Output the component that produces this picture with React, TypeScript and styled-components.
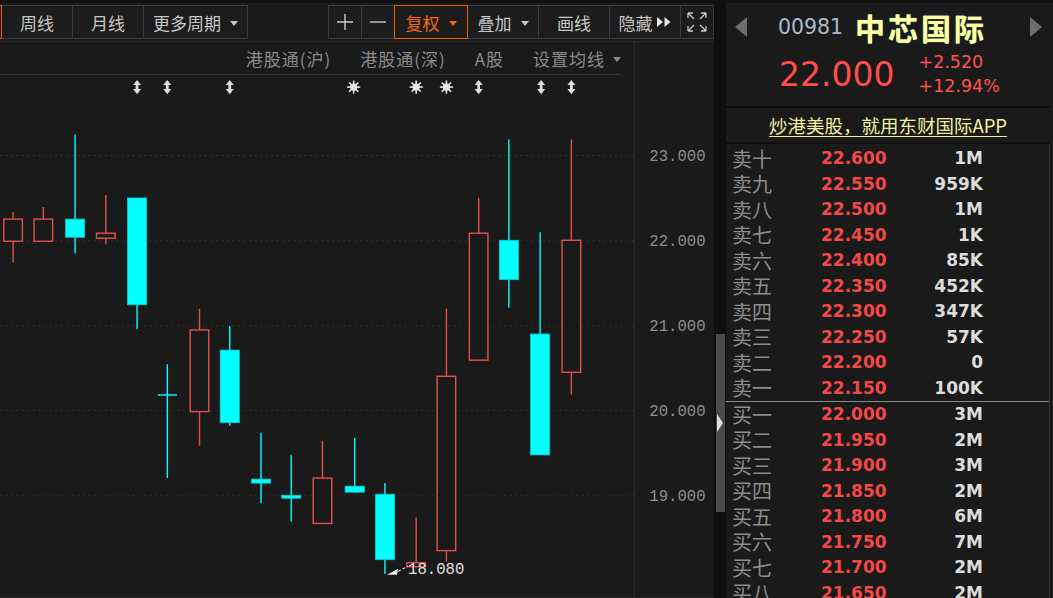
import React from "react";
import styled, { createGlobalStyle } from "styled-components";

const GlobalStyle = createGlobalStyle`
  html, body {
    margin: 0;
    padding: 0;
    background: #101010;
  }
  body {
    font-family: "Noto Sans CJK SC", "DejaVu Sans", sans-serif;
    overflow: hidden;
  }
`;

const RED = "#e4504e";
const CYAN = "#00ffff";

const Page = styled.div`
  display: flex;
  width: 1053px;
  height: 598px;
  padding-top: 3px;
  box-sizing: border-box;
  background: #101010;
`;

const LeftPane = styled.div`
  width: 714px;
  display: flex;
  flex-direction: column;
  background: #1a1a1a;
`;

const Toolbar = styled.div`
  height: 39px;
  flex-shrink: 0;
  box-sizing: border-box;
  display: flex;
  justify-content: space-between;
  align-items: flex-start;
  padding-top: 2px;
  border-bottom: 1px solid #2b2b2b;
  overflow: hidden;
`;

const ToolGroup = styled.div`
  display: flex;
`;

const ToolButton = styled.div<{ $w: number; $active?: boolean; $ml?: number }>`
  position: relative;
  flex-shrink: 0;
  width: ${(p) => p.$w}px;
  height: 34px;
  box-sizing: border-box;
  margin-left: ${(p) => (p.$ml !== undefined ? p.$ml : -1)}px;
  border: 1px solid ${(p) => (p.$active ? "#e8620c" : "#3c3c3c")};
  z-index: ${(p) => (p.$active ? 1 : 0)};
  background: #1c1c1c;
  color: ${(p) => (p.$active ? "#f26a12" : "#c6c6c6")};
  font-size: 17px;
  display: flex;
  align-items: center;
  justify-content: center;
  gap: 9px;
  white-space: nowrap;
`;

const Caret = styled.span`
  width: 0;
  height: 0;
  border-left: 4px solid transparent;
  border-right: 4px solid transparent;
  border-top: 5px solid currentColor;
  margin-top: 2px;
`;

const HideLabel = styled.span`
  display: flex;
  align-items: center;
  gap: 3px;
`;

const Body = styled.div`
  flex: 1;
  display: flex;
  min-height: 0;
`;

const PlotColumn = styled.div`
  width: 635px;
  box-sizing: border-box;
  border-right: 1px solid #2a2a2a;
  display: flex;
  flex-direction: column;
`;

const LabelBar = styled.div`
  height: 33px;
  flex-shrink: 0;
  box-sizing: border-box;
  margin-right: 13px;
  border-bottom: 1px solid #343434;
  display: flex;
  justify-content: flex-end;
  align-items: center;
  gap: 29px;
  color: #8a8a8a;
  font-size: 17px;
  letter-spacing: 1px;
`;

const LabelItem = styled.span`
  display: flex;
  align-items: center;
  gap: 8px;
`;

const PlotSvg = styled.svg`
  display: block;
  flex: 1;
  width: 634px;
`;

const AxisColumn = styled.div`
  width: 79px;
  border-bottom: 1px solid #262626;
`;

const AxisSvg = styled.svg`
  display: block;
  width: 79px;
  height: 100%;
`;

const Divider = styled.div`
  width: 12px;
  background: #0e0e0e;
  padding-top: 331px;
  box-sizing: border-box;
`;

const Thumb = styled.div`
  width: 9px;
  height: 178px;
  margin-left: 2px;
  background: #4a4a4a;
  display: flex;
  align-items: center;
  padding-left: 1px;
  box-sizing: border-box;
`;

const ThumbArrow = styled.span`
  width: 0;
  height: 0;
  border-left: 6px solid #e0e0e0;
  border-top: 9px solid transparent;
  border-bottom: 9px solid transparent;
`;

const RightPane = styled.div`
  width: 327px;
  display: flex;
  flex-direction: column;
  background: #1a1a1a;
  border-right: 3px solid #1a1a1a;
  box-sizing: border-box;
  overflow: hidden;
`;

const Header = styled.div`
  height: 105px;
  flex-shrink: 0;
  box-sizing: border-box;
  padding-top: 9px;
  border-bottom: 2px solid #0d0d0d;
`;

const TitleRow = styled.div`
  height: 30px;
  display: flex;
  align-items: center;
  justify-content: space-between;
  padding: 0 8px 0 9px;
`;

const NavArrow = styled.span<{ $dir: "left" | "right" }>`
  width: 0;
  height: 0;
  border-top: 10px solid transparent;
  border-bottom: 10px solid transparent;
  ${(p) =>
    p.$dir === "left"
      ? "border-right: 12px solid #6e6e6e;"
      : "border-left: 12px solid #6e6e6e;"}
`;

const Title = styled.div`
  display: flex;
  align-items: center;
  gap: 12px;
  margin-right: 12px;
`;

const Code = styled.span`
  font-family: "DejaVu Sans", sans-serif;
  font-size: 20.5px;
  color: #a8bacb;
`;

const Name = styled.span`
  font-size: 30px;
  font-weight: 700;
  letter-spacing: 3px;
  color: #ffffa0;
  text-shadow: 0 0 1px #8ce0d0;
`;

const QuoteRow = styled.div`
  display: flex;
  align-items: center;
  gap: 24px;
  padding-left: 53px;
  height: 64px;
`;

const Price = styled.span`
  font-family: "DejaVu Sans", sans-serif;
  font-size: 33px;
  line-height: 1;
  color: #ff4d4d;
`;

const Change = styled.div`
  display: flex;
  flex-direction: column;
  font-family: "DejaVu Sans", sans-serif;
  font-size: 17.5px;
  line-height: 24px;
  color: #ff5252;
`;

const LinkRow = styled.div`
  height: 36px;
  flex-shrink: 0;
  box-sizing: border-box;
  border-bottom: 2px solid #0d0d0d;
  display: flex;
  align-items: center;
  justify-content: center;
`;

const Link = styled.span`
  font-size: 18.5px;
  color: #f0f0a0;
  text-decoration: underline;
  text-underline-offset: 3px;
`;

const Book = styled.div`
  padding-top: 2px;
  border-right: 1px solid #333;
  flex: 1;
  min-height: 0;
  overflow: hidden;
`;

const BookRow = styled.div`
  height: 25.5px;
  display: grid;
  grid-template-columns: 89px 64px 98px;
  align-items: center;
  padding-left: 6px;
`;

const BookLabel = styled.span`
  font-size: 20px;
  color: #8c8c8c;
  line-height: 1;
`;

const BookPrice = styled.span`
  font-family: "DejaVu Sans", sans-serif;
  font-weight: 700;
  font-size: 17px;
  line-height: 1;
  color: #f24848;
`;

const BookVol = styled.span`
  font-family: "DejaVu Sans", sans-serif;
  font-weight: 700;
  font-size: 17px;
  line-height: 1;
  color: #dcdcdc;
  text-align: right;
`;

const BookSep = styled.div`
  height: 1px;
  background: #8a8a8a;
`;

type Candle = [number, number, number, number, number, "up" | "down"];

// cx, bodyTop, bodyBottom, wickTop, wickBottom (screen px)
const candles: Candle[] = [
  [13, 218, 240, 211, 261, "up"],
  [43, 218, 240, 206, 240, "up"],
  [74.5, 218, 236, 134, 252, "down"],
  [105, 232, 237, 194, 243, "up"],
  [136, 197, 303, 197, 327, "down"],
  [166, 392.5, 393.5, 362, 475, "down"],
  [198, 328, 409, 307, 443, "up"],
  [228, 348, 420, 324, 423, "down"],
  [259, 476, 480, 430, 500, "down"],
  [289, 492, 495, 452, 518, "down"],
  [320, 475, 520, 438, 520, "up"],
  [352, 483, 489, 435, 489, "down"],
  [382, 491, 556, 480, 570, "down"],
  [413, 559, 563, 514, 563, "up"],
  [443, 374, 547, 307, 558, "up"],
  [475, 232, 358, 197, 358, "up"],
  [505, 239, 278, 139, 306, "down"],
  [536, 332, 452, 231, 452, "down"],
  [567, 239, 370, 139, 392, "up"],
];

const gridLevels = [
  { y: 155, label: "23.000" },
  { y: 239.5, label: "22.000" },
  { y: 324, label: "21.000" },
  { y: 408, label: "20.000" },
  { y: 492.5, label: "19.000" },
];

const markers: { x: number; kind: "split" | "sun" }[] = [
  { x: 136, kind: "split" },
  { x: 166, kind: "split" },
  { x: 228, kind: "split" },
  { x: 351, kind: "sun" },
  { x: 413, kind: "sun" },
  { x: 443, kind: "sun" },
  { x: 475, kind: "split" },
  { x: 537, kind: "split" },
  { x: 567, kind: "split" },
];

const sells = [
  ["卖十", "22.600", "1M"],
  ["卖九", "22.550", "959K"],
  ["卖八", "22.500", "1M"],
  ["卖七", "22.450", "1K"],
  ["卖六", "22.400", "85K"],
  ["卖五", "22.350", "452K"],
  ["卖四", "22.300", "347K"],
  ["卖三", "22.250", "57K"],
  ["卖二", "22.200", "0"],
  ["卖一", "22.150", "100K"],
];

const buys = [
  ["买一", "22.000", "3M"],
  ["买二", "21.950", "2M"],
  ["买三", "21.900", "3M"],
  ["买四", "21.850", "2M"],
  ["买五", "21.800", "6M"],
  ["买六", "21.750", "7M"],
  ["买七", "21.700", "2M"],
  ["买八", "21.650", "2M"],
];

const CandleMark = ({ c }: { c: Candle }) => {
  const [cx, top, bot, wTop, wBot, dir] = c;
  const color = dir === "up" ? RED : CYAN;
  const h = bot - top;
  return (
    <g>
      <line x1={cx} y1={wTop} x2={cx} y2={wBot} stroke={color} strokeWidth={1.4} />
      {h <= 1.5 ? (
        <line x1={cx - 9.5} y1={top} x2={cx + 9.5} y2={top} stroke={color} strokeWidth={1.4} />
      ) : dir === "up" ? (
        <rect x={cx - 9.2} y={top} width={18.4} height={h} fill="#1a1a1a" stroke={color} strokeWidth={1.4} />
      ) : (
        <rect x={cx - 9.5} y={top} width={19} height={h} fill={CYAN} stroke="#12c4c4" strokeWidth={0.8} />
      )}
    </g>
  );
};

const Marker = ({ x, kind }: { x: number; kind: "split" | "sun" }) => {
  const y = 87;
  if (kind === "split") {
    return (
      <polygon
        fill="#dcdcdc"
        points={`${x},${y - 7} ${x - 4},${y - 2} ${x - 1.4},${y - 2} ${x - 1.4},${y + 2} ${x - 4},${y + 2} ${x},${y + 7} ${x + 4},${y + 2} ${x + 1.4},${y + 2} ${x + 1.4},${y - 2} ${x + 4},${y - 2}`}
      />
    );
  }
  const rays = Array.from({ length: 8 }, (_, i) => (i * Math.PI) / 4);
  return (
    <g stroke="#e4e4e4" strokeWidth={1.6}>
      <circle cx={x} cy={y} r={3.6} fill="#e4e4e4" stroke="none" />
      {rays.map((a) => (
        <line key={a} x1={x} y1={y} x2={x + Math.cos(a) * 6.5} y2={y + Math.sin(a) * 6.5} />
      ))}
    </g>
  );
};

const PlusIcon = () => (
  <svg width="18" height="18" viewBox="0 0 18 18">
    <path d="M9 1v16M1 9h16" stroke="#c8c8c8" strokeWidth="1.4" />
  </svg>
);

const MinusIcon = () => (
  <svg width="18" height="18" viewBox="0 0 18 18">
    <path d="M1 9h16" stroke="#c8c8c8" strokeWidth="1.4" />
  </svg>
);

const ForwardIcon = () => (
  <svg width="16" height="12" viewBox="0 0 16 12">
    <path d="M1 1l6 5-6 5zM8.5 1l6 5-6 5z" fill="#e6e6e6" />
  </svg>
);

const FullscreenIcon = () => (
  <svg width="22" height="22" viewBox="0 0 22 22" fill="none" stroke="#c8c8c8" strokeWidth="1.3">
    <path d="M2 2l6 6M2 2h5M2 2v5" />
    <path d="M20 2l-6 6M20 2h-5M20 2v5" />
    <path d="M2 20l6-6M2 20h5M2 20v-5" />
    <path d="M20 20l-6-6M20 20h-5M20 20v-5" />
  </svg>
);

export default function App() {
  return (
    <>
      <GlobalStyle />
      <Page>
        <LeftPane>
          <Toolbar>
            <ToolGroup>
              <ToolButton $w={70} $active $ml={-68}>
                日线
              </ToolButton>
              <ToolButton $w={72}>周线</ToolButton>
              <ToolButton $w={72}>月线</ToolButton>
              <ToolButton $w={105}>
                更多周期
                <Caret />
              </ToolButton>
            </ToolGroup>
            <ToolGroup>
              <ToolButton $w={34} $ml={0}>
                <PlusIcon />
              </ToolButton>
              <ToolButton $w={34}>
                <MinusIcon />
              </ToolButton>
              <ToolButton $w={74} $active>
                复权
                <Caret />
              </ToolButton>
              <ToolButton $w={72}>
                叠加
                <Caret />
              </ToolButton>
              <ToolButton $w={72}>画线</ToolButton>
              <ToolButton $w={72}>
                <HideLabel>
                  隐藏
                  <ForwardIcon />
                </HideLabel>
              </ToolButton>
              <ToolButton $w={34}>
                <FullscreenIcon />
              </ToolButton>
            </ToolGroup>
          </Toolbar>
          <Body>
            <PlotColumn>
              <LabelBar>
                <LabelItem>港股通(沪)</LabelItem>
                <LabelItem>港股通(深)</LabelItem>
                <LabelItem>A股</LabelItem>
                <LabelItem>
                  设置均线
                  <Caret />
                </LabelItem>
              </LabelBar>
              <PlotSvg viewBox="0 75 634 519" preserveAspectRatio="xMinYMin slice">
                {gridLevels.map((g) => (
                  <line
                    key={g.label}
                    x1={0}
                    y1={g.y}
                    x2={634}
                    y2={g.y}
                    stroke="#363636"
                    strokeWidth={1}
                    strokeDasharray="1.5 4"
                  />
                ))}
                {markers.map((m, i) => (
                  <Marker key={i} x={m.x} kind={m.kind} />
                ))}
                {candles.map((c, i) => (
                  <CandleMark key={i} c={c} />
                ))}
                <path d="M395 567.5L405 562.5" stroke="#dddddd" strokeWidth={1.2} strokeDasharray="3 2" />
                <polygon points="384,571 395,565 394,571" fill="#e8e8e8" />
                <text x={405} y={570} fontFamily="Liberation Mono, monospace" fontSize={15.5} fill="#e0e0e0">
                  18.080
                </text>
                <line x1={0} y1={593.5} x2={634} y2={593.5} stroke="#262626" />
              </PlotSvg>
            </PlotColumn>
            <AxisColumn>
              <AxisSvg viewBox="0 42 79 551" preserveAspectRatio="xMinYMin slice">
                {gridLevels.map((g) => (
                  <text
                    key={g.label}
                    x={70}
                    y={g.y + 5}
                    textAnchor="end"
                    fontFamily="Liberation Mono, monospace"
                    fontSize={15.5}
                    fill="#8e8e8e"
                  >
                    {g.label}
                  </text>
                ))}
              </AxisSvg>
            </AxisColumn>
          </Body>
        </LeftPane>
        <Divider>
          <Thumb>
            <ThumbArrow />
          </Thumb>
        </Divider>
        <RightPane>
          <Header>
            <TitleRow>
              <NavArrow $dir="left" />
              <Title>
                <Code>00981</Code>
                <Name>中芯国际</Name>
              </Title>
              <NavArrow $dir="right" />
            </TitleRow>
            <QuoteRow>
              <Price>22.000</Price>
              <Change>
                <span>+2.520</span>
                <span>+12.94%</span>
              </Change>
            </QuoteRow>
          </Header>
          <LinkRow>
            <Link>炒港美股，就用东财国际APP</Link>
          </LinkRow>
          <Book>
            {sells.map(([l, p, v]) => (
              <BookRow key={l}>
                <BookLabel>{l}</BookLabel>
                <BookPrice>{p}</BookPrice>
                <BookVol>{v}</BookVol>
              </BookRow>
            ))}
            <BookSep />
            {buys.map(([l, p, v]) => (
              <BookRow key={l}>
                <BookLabel>{l}</BookLabel>
                <BookPrice>{p}</BookPrice>
                <BookVol>{v}</BookVol>
              </BookRow>
            ))}
          </Book>
        </RightPane>
      </Page>
    </>
  );
}
